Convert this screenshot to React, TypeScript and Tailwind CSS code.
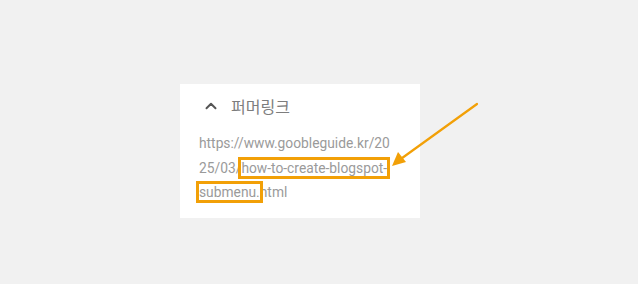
import { ChevronUp } from "lucide-react";

export default function App() {
  return (
    <div className="relative h-[284px] w-[638px] overflow-hidden bg-[#f1f1f1] pl-[180px] pt-[84px] font-['Roboto',sans-serif]">
      <div className="h-[134px] w-[240px] bg-white pl-[19px] pt-[10px]">
        <div className="flex items-center gap-[11px] pl-[3px]">
          <ChevronUp size={18} strokeWidth={2.6} className="text-[#555]" />
          <span className="text-[16px] text-[#7d7d7d] font-['Noto_Sans_CJK_KR',sans-serif]">
            퍼머링크
          </span>
        </div>

        <div className="mt-[13px] text-[13.8px] leading-[24.5px] text-[#9a9a9a]">
          <div>https://www.goobleguide.kr/20</div>
          <div>
            25/03/
            <span className="outline-[3px] outline-solid outline-[#f2a007]">
              how-to-create-blogspot-
            </span>
          </div>
          <div>
            <span className="outline-[3px] outline-solid outline-[#f2a007]">submenu.</span>
            html
          </div>
        </div>
      </div>

      <svg
        className="pointer-events-none absolute left-0 top-0"
        width="638"
        height="284"
        viewBox="0 0 638 284"
      >
        <line x1="477" y1="104" x2="398" y2="161" stroke="#f2a007" strokeWidth="2.2" strokeLinecap="round" />
        <path d="M392 166 L398 152 L406 162 Z" fill="#f2a007" />
      </svg>
    </div>
  );
}
